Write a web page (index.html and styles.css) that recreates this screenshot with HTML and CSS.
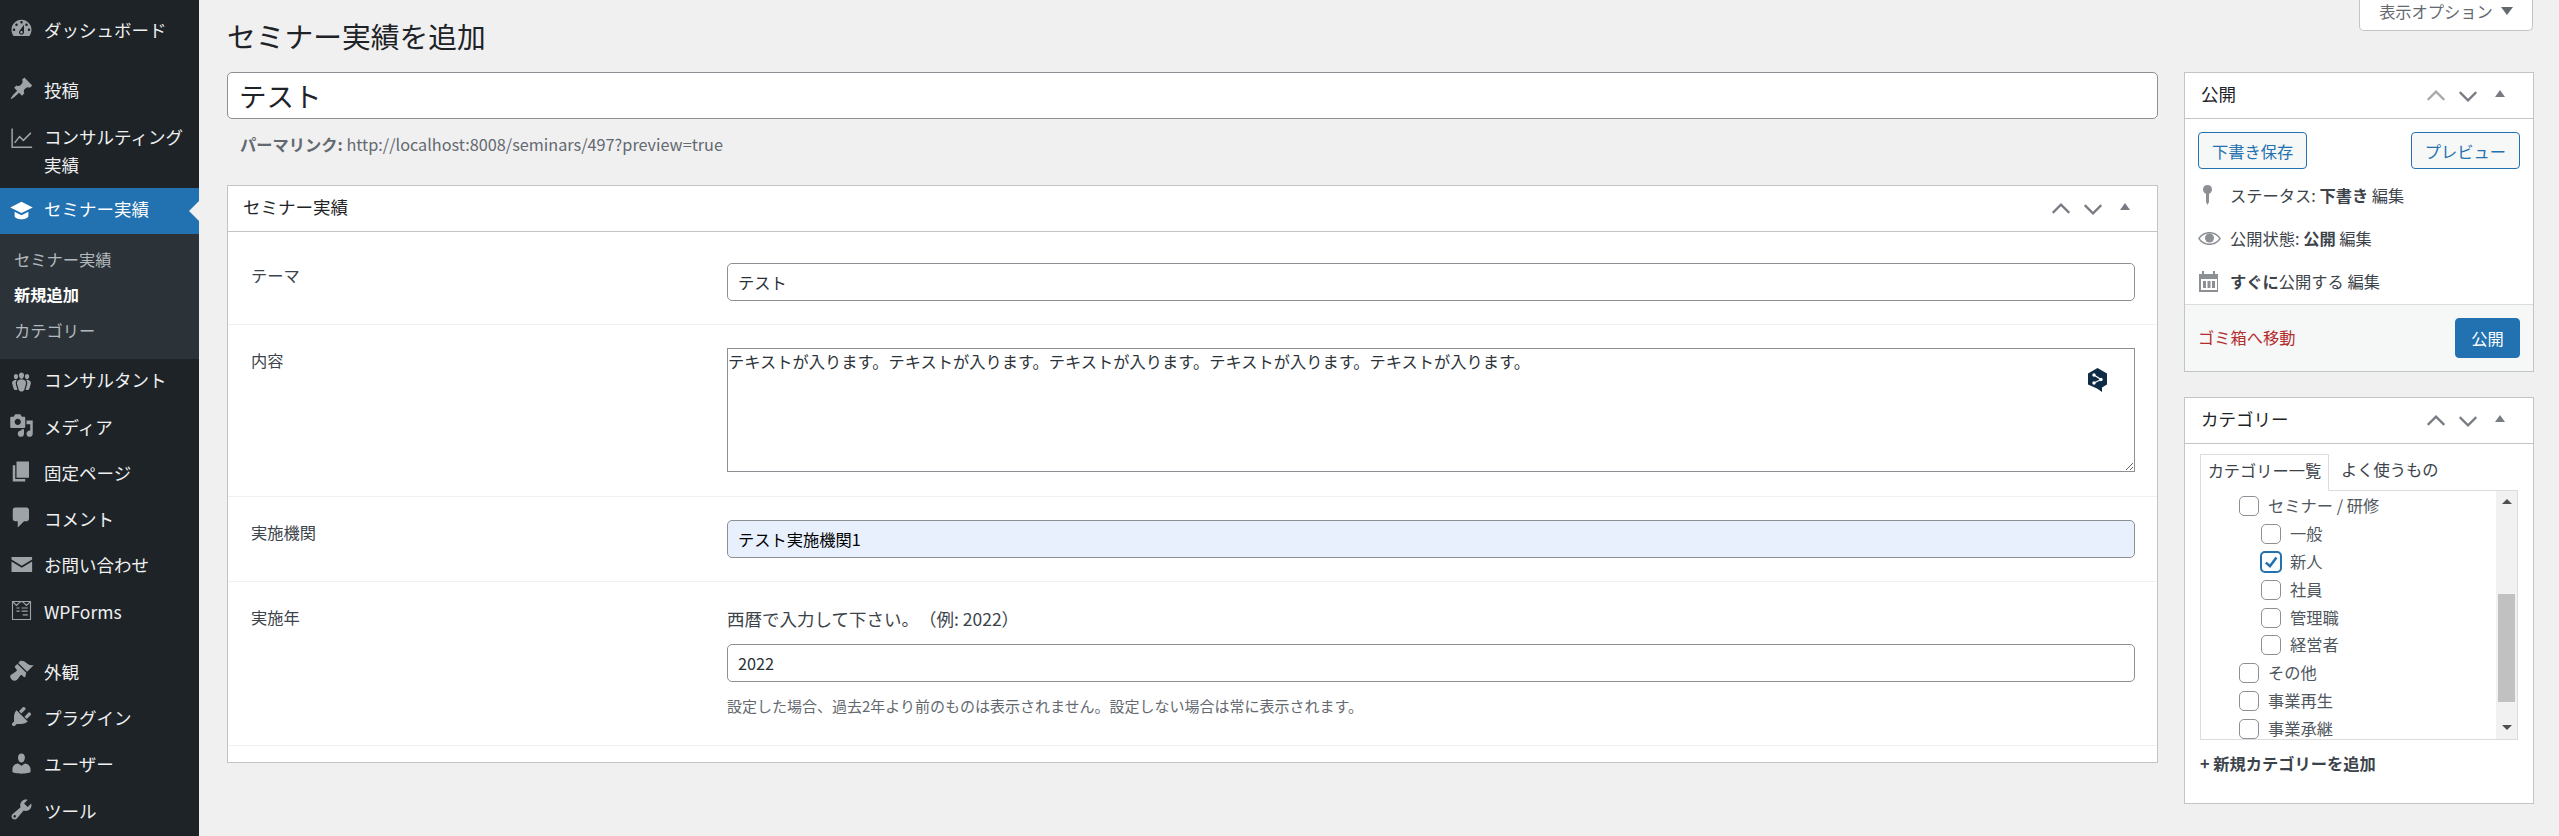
FILE: index.html
```html
<!DOCTYPE html>
<html lang="ja">
<head>
<meta charset="utf-8">
<title>セミナー実績を追加</title>
<link rel="stylesheet" href="styles.css">
</head>
<body>
<div class="app">
<nav class="sidebar">
  <a class="item first"><svg class="ic" viewBox="0 0 20 20"><path fill-rule="evenodd" d="M3.76 16h12.48c1.1-1.37 1.76-3.11 1.76-5 0-4.42-3.58-8-8-8s-8 3.58-8 8c0 1.89.66 3.63 1.76 5zM10 4c.55 0 1 .45 1 1s-.45 1-1 1-1-.45-1-1 .45-1 1-1zM6 6c.55 0 1 .45 1 1s-.45 1-1 1-1-.45-1-1 .45-1 1-1zm8 0c.55 0 1 .45 1 1s-.45 1-1 1-1-.45-1-1 .45-1 1-1zm-5.37 5.55L12 7v6c0 1.1-.9 2-2 2s-2-.9-2-2c0-.57.24-1.08.63-1.45zM4 10c.55 0 1 .45 1 1s-.45 1-1 1-1-.45-1-1 .45-1 1-1zm12 0c.55 0 1 .45 1 1s-.45 1-1 1-1-.45-1-1 .45-1 1-1zm-5 3c0-.55-.45-1-1-1s-1 .45-1 1 .45 1 1 1 1-.45 1-1z"/></svg><span>ダッシュボード</span></a>
  <a class="item sep"><svg class="ic" viewBox="0 0 20 20"><path d="M10.44 3.02l1.82-1.82 6.36 6.35-1.83 1.82c-1.05-.68-2.48-.57-3.41.36l-.75.75c-.92.93-1.04 2.35-.35 3.41l-1.83 1.82-2.41-2.41-2.8 2.79c-.42.42-3.38 2.71-3.8 2.29s1.86-3.39 2.28-3.81l2.79-2.79L4.1 9.36l1.83-1.82c1.05.69 2.48.57 3.4-.36l.75-.75c.93-.92 1.05-2.35.36-3.41z"/></svg><span>投稿</span></a>
  <a class="item two"><svg class="ic" viewBox="0 0 20 20"><path class="line" d="M2.500 2v15h16M4.500 13.500l4-5 3 3 6-6"/></svg><span>コンサルティング<br>実績</span></a>
  <a class="item active"><svg class="ic flat" viewBox="0 0 20 20"><path d="M10 3L1 7.500 10 12l9-4.500zM4.500 11v3.600c0 1.200 2.500 2.400 5.500 2.400s5.500-1.200 5.500-2.400V11L10 13.800z"/></svg><span>セミナー実績</span></a>
  <div class="sub">
    <a>セミナー実績</a>
    <a class="cur">新規追加</a>
    <a>カテゴリー</a>
  </div>
  <a class="item"><svg class="ic flat" viewBox="0 0 20 20"><path d="M8.030 4.460c-.29 1.280.55 3.460 1.970 3.460 1.410 0 2.250-2.180 1.960-3.460-.22-.98-1.080-1.630-1.960-1.630-.89 0-1.740.65-1.970 1.630zm-4.130.9c-.25 1.080.47 2.930 1.670 2.930s1.920-1.850 1.670-2.930c-.19-.83-.92-1.390-1.670-1.390s-1.480.56-1.670 1.390zm8.860 0c-.25 1.080.47 2.930 1.660 2.930 1.200 0 1.920-1.850 1.670-2.930-.19-.83-.92-1.390-1.670-1.390-.74 0-1.470.56-1.660 1.390zm-.59 11.430l1.250-4.300C14.200 10 12.710 8.470 10 8.470c-2.720 0-4.210 1.530-3.440 4.020l1.260 4.300C8.050 17.510 9 18 10 18c.98 0 1.940-.49 2.170-1.210zm-6.100-7.630c-.49.67-.96 1.830-.42 3.590l1.120 3.790c-.34.2-.77.31-1.200.31-.85 0-1.650-.41-1.850-1.030l-1.070-3.650c-.65-2.110.61-3.400 2.920-3.400.27 0 .54.02.79.06-.1.1-.2.22-.29.33zm8.350-.39c2.310 0 3.580 1.290 2.920 3.400l-1.070 3.650c-.2.62-1 1.030-1.850 1.030-.43 0-.86-.11-1.200-.31l1.110-3.770c.55-1.780.08-2.940-.42-3.610-.08-.11-.18-.23-.28-.33.25-.04.51-.06.79-.06z"/></svg><span>コンサルタント</span></a>
  <a class="item"><svg class="ic" viewBox="0 0 20 20"><path fill-rule="evenodd" d="M13 11V4c0-.55-.45-1-1-1h-1.670L9 1H5L3.670 3H2c-.55 0-1 .45-1 1v7c0 .55.45 1 1 1h10c.55 0 1-.45 1-1zM7 4.500c1.380 0 2.500 1.120 2.500 2.500S8.380 9.500 7 9.500 4.500 8.380 4.500 7 5.620 4.500 7 4.500zM14 6h5v10.500c0 1.380-1.120 2.500-2.500 2.500S14 17.880 14 16.500s1.120-2.500 2.500-2.500c.17 0 .34.02.5.05V9h-3V6zm-4 8.050V13h2v3.500c0 1.380-1.120 2.500-2.500 2.500S7 17.880 7 16.500 8.120 14 9.500 14c.17 0 .34.02.5.05z"/></svg><span>メディア</span></a>
  <a class="item"><svg class="ic" viewBox="0 0 20 20"><path d="M6 15V2h10v13H6zm-1 1h8v2H3V5h2v11z"/></svg><span>固定ページ</span></a>
  <a class="item"><svg class="ic" viewBox="0 0 20 20"><path d="M5 2h9c1.100 0 2 .9 2 2v7c0 1.100-.9 2-2 2h-2l-5 5v-5H5c-1.100 0-2-.9-2-2V4c0-1.100.9-2 2-2z"/></svg><span>コメント</span></a>
  <a class="item"><svg class="ic" viewBox="0 0 20 20"><path d="M2 4h16.500v2L10.200 11 2 6zM2 7.500l8.200 5 8.300-5V16H2z"/></svg><span>お問い合わせ</span></a>
  <a class="item"><svg class="ic" viewBox="0 0 20 20"><path class="line thin" d="M2.800 2.800h14.400v14.400H2.800zM3 3l3 3 3-3 2 0 3 3 3-3M6 8h2.500M10 8h5M6 10.500h2.500M10 10.500h5M11 13.500h4"/></svg><span>WPForms</span></a>
  <a class="item sep"><svg class="ic" viewBox="0 0 20 20"><path d="M14.480 11.060L7.410 3.990l1.500-1.500c.5-.56 2.300-.47 3.510.32 1.210.8 1.430 1.280 2.910 2.100 1.180.64 2.450 1.260 4.450.85zm-.71.71L6.700 4.700 4.930 6.470c-.39.39-.39 1.020 0 1.410l1.060 1.060c.39.39.39 1.030 0 1.420-.6.6-1.430 1.110-2.210 1.690-.35.26-.7.53-1.010.84C1.430 13.230.99 14.050 1 15c.01.62.22 1.210.66 1.660l.71.71c1.110 1.110 2.950 1.130 4.270-.19.3-.3.58-.65.84-1.010.58-.78 1.090-1.610 1.690-2.210.39-.39 1.030-.39 1.420 0l1.060 1.060c.39.39 1.020.39 1.410 0z"/></svg><span>外観</span></a>
  <a class="item"><svg class="ic" viewBox="0 0 20 20"><path d="M13.110 4.360L9.870 7.600 8 5.730l3.240-3.240c.35-.34 1.050-.2 1.560.32.52.51.66 1.210.31 1.550zm-8 1.770l.91-1.120 9.010 9.010-1.190.84c-.71.71-2.630 1.160-3.820 1.160H6.140L4.900 17.260c-.59.59-1.540.59-2.120 0-.59-.58-.59-1.530 0-2.120l1.240-1.240v-3.880c0-1.130.4-3.190 1.090-3.890zm7.260 3.970l3.240-3.240c.34-.35 1.040-.21 1.550.31.52.51.66 1.210.31 1.550l-3.240 3.250z"/></svg><span>プラグイン</span></a>
  <a class="item"><svg class="ic" viewBox="0 0 20 20"><path d="M10 9.250c-2.270 0-2.730-3.440-2.730-3.440C7 4.020 7.820 2 9.970 2c2.160 0 2.980 2.020 2.710 3.810 0 0-.41 3.440-2.680 3.440zm0 2.570L12.720 10c2.390 0 4.520 2.330 4.520 4.530v2.490s-3.650 1.130-7.240 1.130c-3.650 0-7.240-1.130-7.240-1.130v-2.490c0-2.250 1.940-4.480 4.470-4.480z"/></svg><span>ユーザー</span></a>
  <a class="item"><svg class="ic" viewBox="0 0 20 20"><path fill-rule="evenodd" d="M16.680 9.770c-1.340 1.340-3.300 1.670-4.950.99l-5.410 6.520c-.99.99-2.590.99-3.580 0s-.99-2.59 0-3.570l6.520-5.420c-.68-1.650-.35-3.610.99-4.950 1.280-1.280 3.120-1.620 4.720-1.060l-2.890 2.890 2.820 2.820 2.860-2.870c.53 1.580.18 3.390-1.080 4.650zM3.810 16.210c.4.39 1.040.39 1.430 0 .4-.4.4-1.040 0-1.430-.39-.4-1.030-.4-1.430 0-.39.39-.39 1.030 0 1.430z"/></svg><span>ツール</span></a>
  <a class="item" aria-label="設定"><svg class="ic" viewBox="0 0 20 20"><path fill-rule="evenodd" d="M18 12h-2.180c-.17.7-.44 1.350-.81 1.930l1.540 1.540-2.100 2.100-1.540-1.540c-.58.36-1.230.63-1.910.79V19H8v-2.180c-.68-.16-1.330-.43-1.910-.79l-1.540 1.540-2.120-2.120 1.540-1.540c-.36-.58-.63-1.230-.79-1.910H1V9.030h2.170c.16-.7.44-1.350.8-1.940L2.430 5.550l2.100-2.100 1.540 1.540c.58-.37 1.240-.64 1.930-.81V2h3v2.180c.68.16 1.330.43 1.910.79l1.540-1.540 2.120 2.120-1.540 1.540c.36.59.64 1.240.8 1.940H18V12zm-8.500 1.500c1.660 0 3-1.340 3-3s-1.340-3-3-3-3 1.340-3 3 1.340 3 3 3z"/></svg></a>
</nav>

<main class="main">
  <div class="top-row">
    <h1>セミナー実績を追加</h1>
    <button class="screen-opt">表示オプション<i class="tri-down"></i></button>
  </div>
  <div class="columns">
    <div class="col-main">
      <input class="title-input" type="text" value="テスト">
      <p class="permalink"><b>パーマリンク:</b> http://localhost:8008/seminars/497?preview=true</p>
      <section class="box">
        <header class="box-head main-head">
          <h2>セミナー実績</h2>
          <div class="ctrls"><svg viewBox="0 0 20 20"><path d="M2.500 13.500L10 6l7.500 7.500"/></svg><svg viewBox="0 0 20 20"><path d="M2.500 6.500L10 14l7.500-7.500"/></svg><i class="tri-up"></i></div>
        </header>
        <div class="row row-first">
          <label>テーマ</label>
          <div class="field"><input class="inp" type="text" value="テスト"></div>
        </div>
        <div class="row row-area">
          <label>内容</label>
          <div class="field area-wrap">
            <textarea class="area">テキストが入ります。テキストが入ります。テキストが入ります。テキストが入ります。テキストが入ります。</textarea>
            <svg class="bubble" viewBox="0 0 19 24"><path fill="#0f2b46" d="M9.500 0L19 5.500v11L14 19.500V24l-5-3.500L0 16.500v-11z"/><path fill="none" stroke="#fff" stroke-width="1.200" d="M6 7l7 4.500L6 15"/><circle cx="6" cy="7" r="1.700" fill="#fff"/><circle cx="13" cy="11.500" r="1.700" fill="#fff"/><circle cx="6" cy="15" r="1.700" fill="#fff"/></svg>
          </div>
        </div>
        <div class="row">
          <label>実施機関</label>
          <div class="field"><input class="inp filled" type="text" value="テスト実施機関1"></div>
        </div>
        <div class="row row-year">
          <label>実施年</label>
          <div class="field">
            <p class="lead">西暦で入力して下さい。（例: 2022）</p>
            <input class="inp" type="text" value="2022">
            <p class="help">設定した場合、過去2年より前のものは表示されません。設定しない場合は常に表示されます。</p>
          </div>
        </div>
        <div class="row-end"></div>
      </section>
    </div>

    <aside class="col-side">
      <section class="box">
        <header class="box-head side-head">
          <h2>公開</h2>
          <div class="ctrls"><svg viewBox="0 0 20 20"><path class="dim" d="M2.500 13.500L10 6l7.500 7.500"/></svg><svg viewBox="0 0 20 20"><path d="M2.500 6.500L10 14l7.500-7.500"/></svg><i class="tri-up"></i></div>
        </header>
        <div class="pub-btns"><button class="btn">下書き保存</button><button class="btn">プレビュー</button></div>
        <div class="pub-rows">
          <div class="pub-row"><svg class="meta" viewBox="0 0 25 25"><circle cx="9.500" cy="6.500" r="4.500"/><path d="M8 9h3v10l-1.500 3L8 19z"/></svg><span>ステータス: <b>下書き</b> 編集</span></div>
          <div class="pub-row"><svg class="meta" viewBox="0 0 25 25"><path fill-rule="evenodd" d="M0 12.500C3 8 7 6 11.500 6s8.500 2 11.500 6.500C20 17 16 19 11.500 19S3 17 0 12.500zM1.800 12.500c2.500 3.300 5.800 5 9.700 5s7.200-1.700 9.700-5c-2.500-3.300-5.800-5-9.700-5s-7.200 1.700-9.700 5z"/><circle cx="11.500" cy="12" r="4.500"/></svg><span>公開状態: <b>公開</b> 編集</span></div>
          <div class="pub-row"><svg class="meta" viewBox="0 0 25 25"><path fill-rule="evenodd" d="M1 5h3V2h2v3h9V2h2v3h3v18H1zM3 10v11h16V10z"/><path d="M5 12h3v7H5zM9.500 12h3v7h-3zM14 12h3v7h-3z"/></svg><span><b>すぐに</b>公開する 編集</span></div>
        </div>
        <footer class="pub-foot"><a class="trash">ゴミ箱へ移動</a><button class="btn-primary">公開</button></footer>
      </section>

      <section class="box">
        <header class="box-head side-head">
          <h2>カテゴリー</h2>
          <div class="ctrls"><svg viewBox="0 0 20 20"><path d="M2.500 13.500L10 6l7.500 7.500"/></svg><svg viewBox="0 0 20 20"><path d="M2.500 6.500L10 14l7.500-7.500"/></svg><i class="tri-up"></i></div>
        </header>
        <div class="cat-body">
          <div class="tabs"><span class="tab on">カテゴリー一覧</span><span class="tab">よく使うもの</span></div>
          <div class="panel">
            <ul class="cats">
              <li class="l1"><i class="cb"></i><span>セミナー / 研修</span></li>
              <li class="l2"><i class="cb"></i><span>一般</span></li>
              <li class="l2"><i class="cb checked"><svg viewBox="0 0 20 20"><path d="M15.500 3.500l2.600 1.800L9 17.500 2.500 12l2-2.400 4 3.300z"/></svg></i><span>新人</span></li>
              <li class="l2"><i class="cb"></i><span>社員</span></li>
              <li class="l2"><i class="cb"></i><span>管理職</span></li>
              <li class="l2"><i class="cb"></i><span>経営者</span></li>
              <li class="l1"><i class="cb"></i><span>その他</span></li>
              <li class="l1"><i class="cb"></i><span>事業再生</span></li>
              <li class="l1"><i class="cb"></i><span>事業承継</span></li>
            </ul>
            <div class="sbar"><i class="sb-up"></i><div class="sb-track"><div class="sb-thumb"></div></div><i class="sb-down"></i></div>
          </div>
          <a class="add-cat">+ 新規カテゴリーを追加</a>
        </div>
      </section>
    </aside>
  </div>
</main>
</div>
</body>
</html>
```
FILE: styles.css
```css
* { box-sizing: border-box; }
html, body { margin: 0; height: 100%; overflow: hidden; }
body {
  background: #f0f0f1;
  color: #3c434a;
  font-family: "Noto Sans CJK JP", "Noto Sans", sans-serif;
  font-size: 16.25px;
  line-height: 28px;
  text-spacing-trim: space-all;
}
h1, h2, p, ul { margin: 0; padding: 0; }
button, input, textarea { font-family: inherit; text-spacing-trim: space-all; }
.app { display: flex; height: 836px; overflow: hidden; }

/* sidebar */
.sidebar { width: 199px; flex: none; background: #1d2327; padding-top: 8px; color: #f0f0f1; font-size: 17.5px; }
.item { display: flex; align-items: center; gap: 10px; height: 46.25px; padding-left: 9px; position: relative; }
.item span { padding-bottom: 2.5px; }
.item.sep { margin-top: 14px; }
.item.two { height: 73px; align-items: flex-start; padding-top: 8.5px; line-height: 27.5px; }
.item.active { background: #2271b1; color: #fff; height: 46px; }
.item.active .ic { fill: #fff; }
.item.active::after {
  content: ""; position: absolute; right: 0; top: 13px;
  border: 10px solid transparent; border-left: 0; border-right-color: #f0f0f1;
}
.ic { width: 25px; height: 25px; flex: none; fill: #9ea3a8; margin-top: -5px; }
.ic.flat { margin-top: 0; }
.two .ic { margin-top: 2.5px; }
.ic .line { fill: none; stroke: #9ea3a8; stroke-width: 1.2; }
.ic .line.thin { stroke-width: .9; }
.sub { background: #2c3338; padding: 8px 0 10.5px; font-size: 16.25px; color: #b4b9be; }
.sub a { display: block; height: 35.5px; line-height: 35.5px; padding-left: 14px; }
.sub a.cur { color: #fff; font-weight: 700; }

/* main */
.main { flex: 1; min-width: 0; padding: 0 25px 0 28px; }
.top-row { display: flex; justify-content: space-between; align-items: flex-start; height: 72px; }
h1 { font-size: 28.75px; font-weight: 400; line-height: 37px; color: #1d2327; margin-top: 17px; }
.screen-opt {
  width: 174px; height: 31px; margin-right: 1px; padding: 0 0 9px; border: 1px solid #c3c4c7; border-top: 0;
  border-radius: 0 0 5px 5px; background: #fff; color: #646970; font-size: 16.25px; line-height: 22px;
  display: flex; align-items: center; justify-content: center; gap: 8px;
}
.tri-down { width: 0; height: 0; border: 6px solid transparent; border-bottom: 0; border-top: 8px solid #646970; }
.columns { display: grid; grid-template-columns: 1fr 350px; column-gap: 26px; align-items: start; }

.title-input {
  display: block; width: 100%; height: 47px; border: 1px solid #8c8f94; border-radius: 5px; background: #fff;
  padding: 0 11px 2px; font-size: 27.5px; color: #1d2327;
}
.permalink { margin-top: 11px; height: 55px; padding-left: 13px; line-height: 28px; color: #646970; }
.permalink b { font-weight: 700; }

.box { background: #fff; border: 1px solid #c3c4c7; }
.col-side .box + .box { margin-top: 25px; }
.box-head { display: flex; align-items: center; justify-content: space-between; height: 46px; border-bottom: 1px solid #c3c4c7; }
.box-head h2 { font-size: 17.5px; font-weight: 400; color: #1d2327; line-height: 28px; padding-bottom: 3px; }
.main-head { padding: 0 27px 0 15px; }
.side-head { padding: 0 28px 0 16px; }
.ctrls { display: flex; align-items: center; gap: 10px; }
.ctrls svg { width: 22px; height: 22px; fill: none; stroke: #787c82; stroke-width: 2; }
.ctrls .dim { stroke: #a7aaad; }
.tri-up { width: 0; height: 0; margin: -4px 0 0 6px; border: 5px solid transparent; border-top: 0; border-bottom: 7px solid #787c82; }

.row { display: grid; grid-template-columns: 499px 1fr; padding: 23px 22px 23px 0; border-bottom: 1px solid #f0f0f1; }
.row label { padding-left: 23px; line-height: 28px; color: #3c434a; margin-top: -2px; }
.row-first { padding-top: 31px; }
.row-area { padding-bottom: 24px; }
.row-year { padding-bottom: 25px; }
.row-end { height: 16px; }
.inp {
  display: block; width: 100%; height: 38px; border: 1px solid #8c8f94; border-radius: 5px; background: #fff;
  padding: 0 10px; font-size: 16.25px; color: #2c3338;
}
.inp.filled { background: #e8f0fe; color: #000; }
.area-wrap { position: relative; }
.area {
  display: block; width: 100%; height: 124px; border: 1px solid #8c8f94; border-radius: 0; background: #fff;
  padding: 1px 1px 1px 0; font-size: 16.25px; line-height: 22px; color: #2c3338; resize: vertical; margin: 0;
}
.bubble { position: absolute; right: 28px; top: 20px; width: 19px; height: 24px; }
.lead { font-size: 17.5px; line-height: 27px; margin-bottom: 12px; color: #3c434a; }
.help { margin-top: 10px; font-size: 15px; line-height: 28px; color: #646970; height: 28px; }

/* publish */
.btn {
  height: 37px; padding: 0 13px; border: 1px solid #2271b1; border-radius: 4px; background: #f6f7f7; color: #2271b1;
  font-size: 16.25px; line-height: 22px;
}
.pub-btns { display: flex; justify-content: space-between; padding: 13px 13px 0; }
.pub-rows { padding: 4.5px 13px 1.5px; }
.pub-row { display: flex; align-items: center; gap: 7px; height: 43px; }
.meta { width: 25px; height: 25px; flex: none; fill: #8c8f94; }
.pub-row b { font-weight: 700; }
.pub-foot {
  display: flex; justify-content: space-between; align-items: center; height: 67px; padding: 0 13px;
  background: #f6f7f7; border-top: 1px solid #dcdcde;
}
.trash { color: #b32d2e; padding-bottom: 3px; }
.btn-primary {
  width: 65px; height: 40px; padding: 0; border: 1px solid #2271b1; border-radius: 4px; background: #2271b1; color: #fff; font-size: 16.25px;
}

/* categories */
.cat-body { padding: 10px 15px 26px; }
.tabs { display: flex; height: 37px; position: relative; z-index: 1; margin-bottom: -1px; }
.tab { padding: 0 12px; line-height: 31px; }
.tab.on { width: 129px; padding: 0; text-align: center; background: #fff; border: 1px solid #dcdcde; border-bottom: 0; color: #3c434a; height: 37px; }
.panel { display: flex; width: 318px; height: 250px; border: 1px solid #dcdcde; overflow: hidden; }
.cats { flex: 1; list-style: none; padding-top: 1px; }
.cats li { display: flex; align-items: center; height: 27.9px; color: #50575e; }
.cats span { padding-bottom: 2px; }
.l1 { padding-left: 38px; }
.l2 { padding-left: 60px; }
.cb { flex: none; width: 20px; height: 20px; border: 1px solid #8c8f94; border-radius: 5px; background: #fff; margin-right: 9px; }
.cb.checked { border: 2px solid #2271b1; width: 22px; height: 22px; margin: 0 8px 0 -1px; display: flex; align-items: center; justify-content: center; }
.cb.checked svg { width: 16px; height: 16px; fill: #2271b1; }
.sbar { width: 21px; flex: none; background: #f1f1f1; display: flex; flex-direction: column; align-items: center; }
.sb-up, .sb-down { width: 0; height: 0; flex: none; border: 5px solid transparent; }
.sb-up { border-top: 0; border-bottom: 5px solid #505050; margin: 8px 0 4px; }
.sb-down { border-bottom: 0; border-top: 5px solid #505050; margin: 0 0 9px; }
.sb-track { flex: 1; width: 100%; display: flex; flex-direction: column; padding: 86px 2px 17px; }
.sb-thumb { height: 108px; background: #c1c1c1; }
.add-cat { display: block; margin-top: 9px; font-weight: 700; line-height: 28px; color: #3c434a; }
```
